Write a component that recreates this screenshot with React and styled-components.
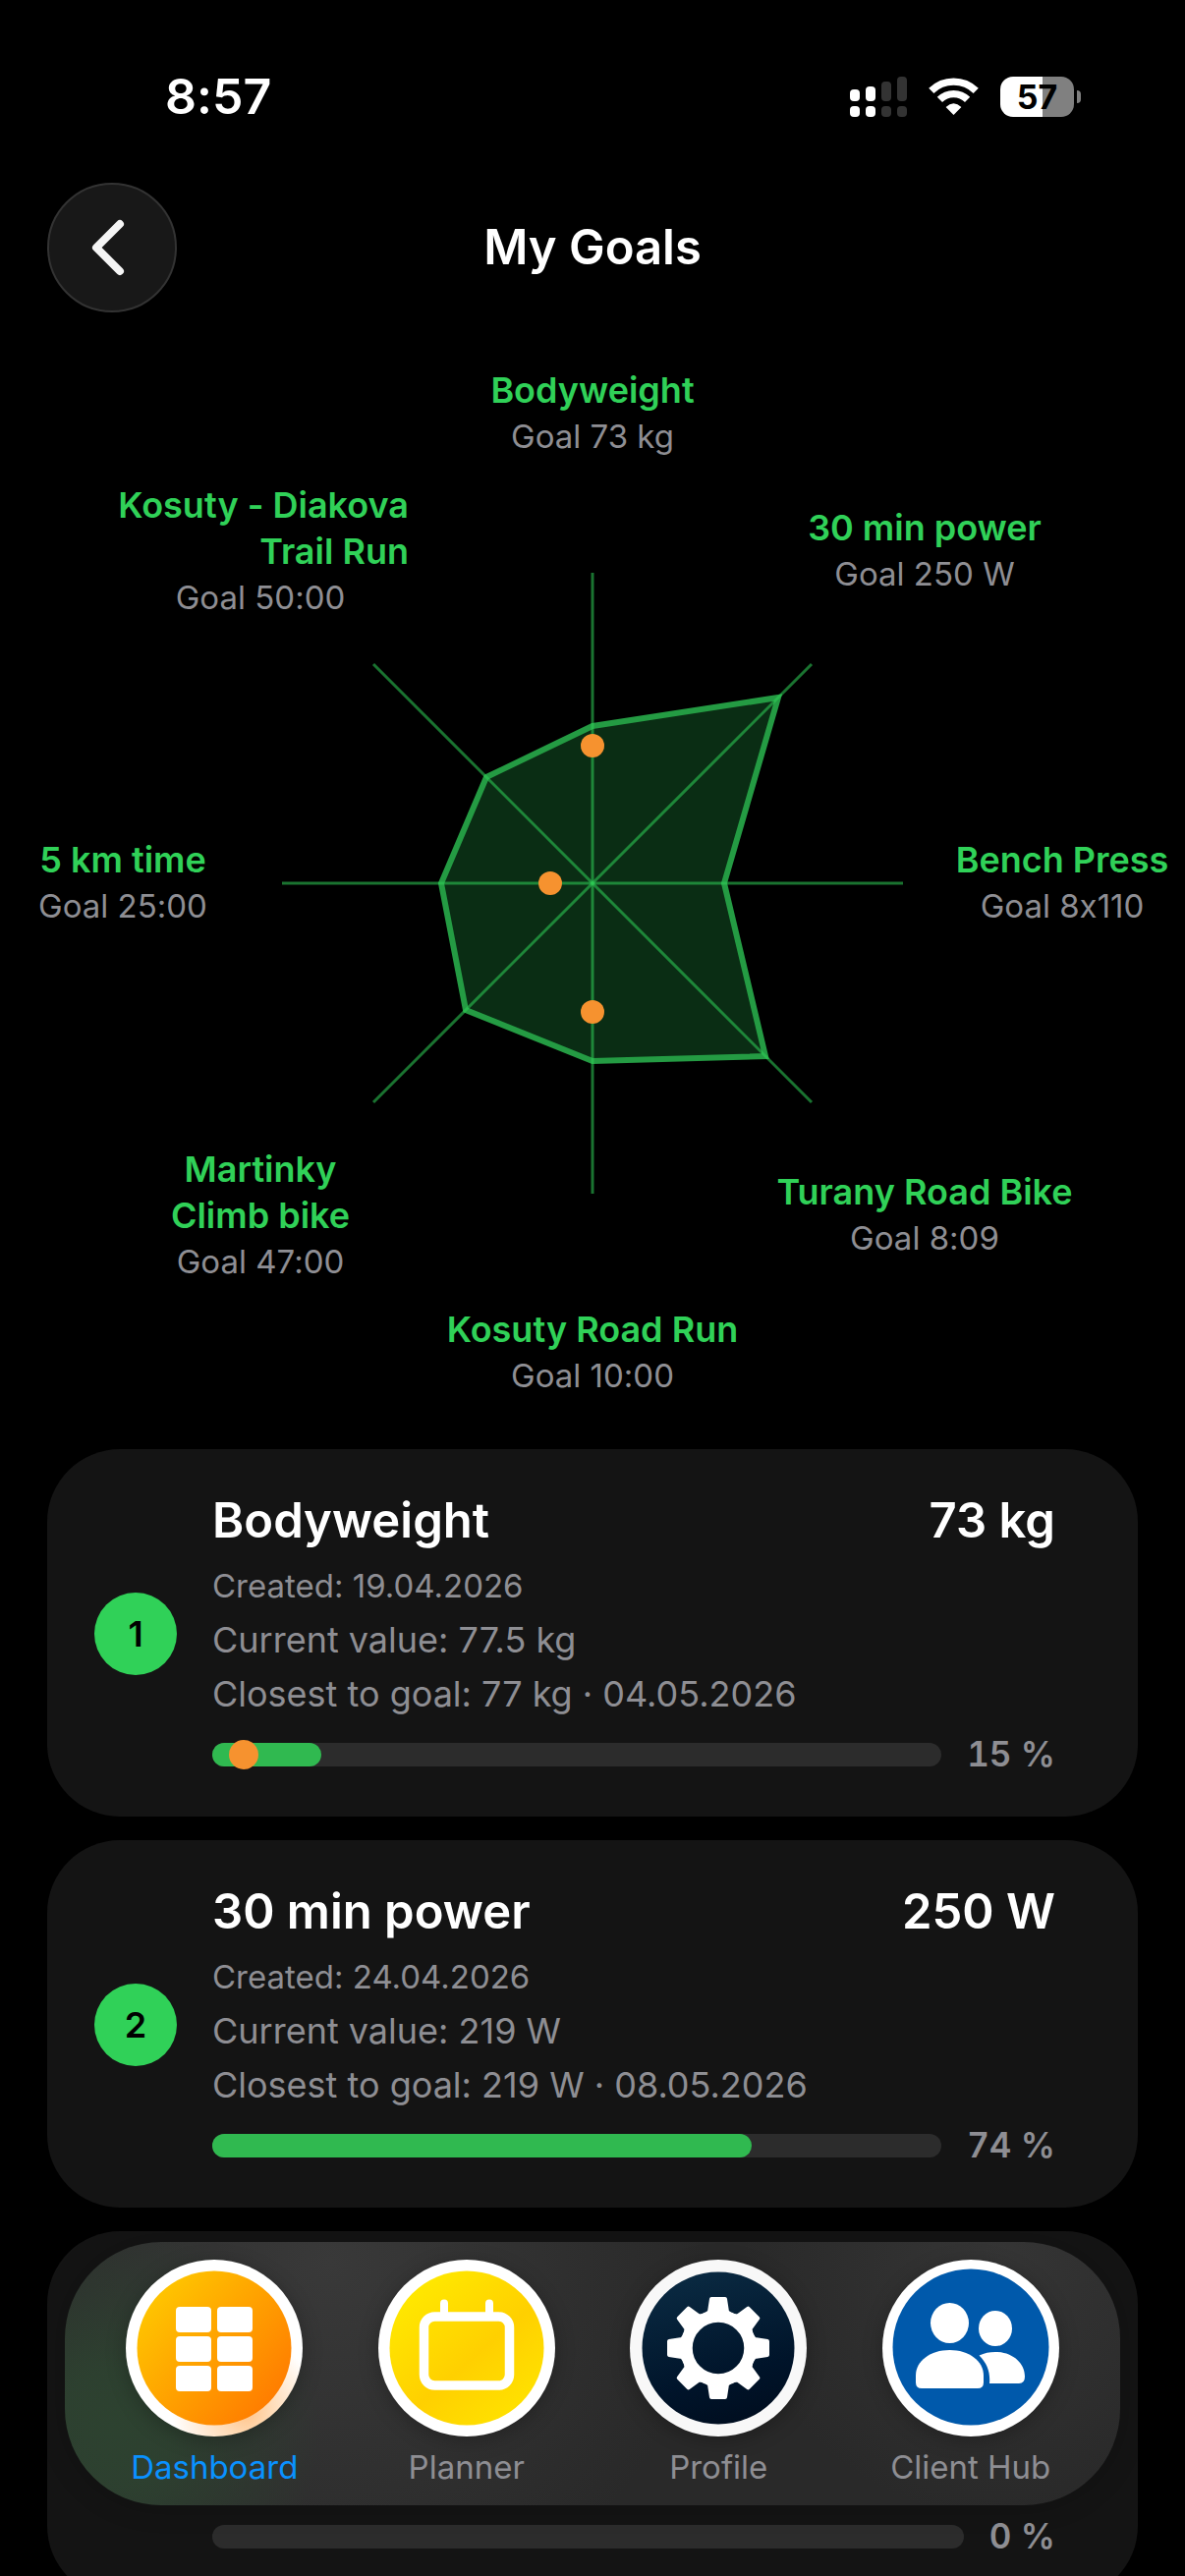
import styled, { createGlobalStyle } from "styled-components";

const GlobalStyle = createGlobalStyle`
  * {
    box-sizing: border-box;
  }

  body {
    margin: 0;
    background: #000;
    color: #fff;
    font-family: Inter, "Liberation Sans", sans-serif;
    font-feature-settings: "calt" 0;
  }
`;

const Screen = styled.div`
  position: relative;
  height: 100vh;
  overflow: hidden;
`;

const StatusBar = styled.div`
  display: flex;
  align-items: center;
  justify-content: space-between;
  height: 60px;
  margin: 68px 106px 0 168px;
`;

const Clock = styled.time`
  font-size: 50px;
  font-weight: 600;
  line-height: 60px;
`;

const StatusIcons = styled.div`
  display: flex;
  align-items: center;
  gap: 22px;
`;

const BatteryWrap = styled.div`
  display: flex;
  align-items: center;
  gap: 3px;
`;

const BatteryBody = styled.div`
  width: 75px;
  height: 41px;
  border-radius: 13px;
  background: linear-gradient(to right, #fff 57%, #808080 57%);
  color: #000;
  font-size: 34px;
  font-weight: 700;
  line-height: 41px;
  text-align: center;
`;

const BatteryNub = styled.div`
  width: 4px;
  height: 13px;
  border-radius: 0 4px 4px 0;
  background: #808080;
`;

const Header = styled.header`
  display: grid;
  grid-template-columns: 132px 1fr 132px;
  align-items: center;
  margin-top: 58px;
  padding: 0 48px 5px;
`;

const BackButton = styled.button`
  display: flex;
  align-items: center;
  justify-content: center;
  width: 132px;
  height: 132px;
  padding: 0 8px 0 0;
  border: 2px solid #333;
  border-radius: 50%;
  background: #181818;
`;

const PageTitle = styled.h1`
  margin: 0;
  font-size: 49px;
  font-weight: 600;
  line-height: 60px;
  text-align: center;
`;

const Chart = styled.section`
  position: relative;
  display: flex;
  align-items: center;
  justify-content: center;
  height: 1152px;
`;

const AxisLabel = styled.div`
  position: absolute;
  left: calc(50% + ${(props) => props.$x}px);
  top: calc(50% + ${(props) => props.$y}px);
  display: flex;
  flex-direction: column;
  align-items: center;
  transform: translate(-50%, -50%);
`;

const AxisName = styled.span`
  min-width: ${(props) => (props.$align === "right" ? "302px" : "0")};
  color: #30d158;
  font-size: 36px;
  font-weight: 600;
  line-height: 47px;
  text-align: ${(props) => props.$align};
  white-space: pre;
`;

const AxisGoal = styled.span`
  color: #8e8e93;
  font-size: 33px;
  line-height: 47px;
  white-space: nowrap;
`;

const GoalList = styled.ol`
  display: flex;
  flex-direction: column;
  gap: 24px;
  margin: 0;
  padding: 0 48px;
  list-style: none;
`;

const GoalCard = styled.li`
  display: flex;
  align-items: center;
  gap: 36px;
  min-height: 374px;
  padding: 43px 84px 42px 48px;
  border-radius: 74px;
  background: #141414;
`;

const Rank = styled.span`
  flex: none;
  width: 84px;
  height: 84px;
  border-radius: 50%;
  background: ${(props) => (props.$filled ? "#30d158" : "transparent")};
  color: #000;
  font-size: 36px;
  font-weight: 600;
  line-height: 84px;
  text-align: center;
`;

const GoalBody = styled.div`
  display: flex;
  flex: 1;
  flex-direction: column;
  align-self: stretch;
  justify-content: flex-end;
`;

const GoalHeading = styled.div`
  display: flex;
  justify-content: space-between;
  margin-bottom: 9px;
  font-size: 49px;
  font-weight: 600;
  line-height: 60px;
`;

const GoalName = styled.h2`
  margin: 0;
  font-size: inherit;
  font-weight: inherit;
`;

const GoalMeta = styled.p`
  margin: 0;
  color: #8e8e93;
  font-size: ${(props) => (props.$small ? "33px" : "36px")};
  line-height: 55px;
`;

const ProgressRow = styled.div`
  display: flex;
  align-items: center;
  gap: 26px;
  margin-top: 12px;
`;

const Track = styled.div`
  position: relative;
  flex: 1;
  height: 24px;
  border-radius: 12px;
  background: #2c2c2c;
`;

const Fill = styled.div`
  height: 100%;
  border-radius: 12px;
  background: #30b950;
`;

const Marker = styled.div`
  position: absolute;
  top: -3px;
  width: 30px;
  height: 30px;
  border-radius: 50%;
  background: #f6922f;
  transform: translateX(-50%);
`;

const Percent = styled.span`
  color: #8e8e93;
  font-size: 35px;
  font-variant-numeric: tabular-nums;
  font-weight: 600;
  line-height: 43px;
`;

const TabBar = styled.nav`
  position: absolute;
  right: 66px;
  bottom: 72px;
  left: 66px;
  display: grid;
  grid-template-columns: repeat(4, 1fr);
  height: 268px;
  padding: 18px 24px;
  border-radius: 98px;
  background:
    radial-gradient(circle at 50px 190px, #2d4230 0, rgba(45, 66, 48, 0.9) 60px, rgba(45, 66, 48, 0) 210px),
    radial-gradient(circle at 270px 20px, #393939 0, rgba(57, 57, 57, 0) 380px),
    radial-gradient(circle at 950px 20px, #353535 0, rgba(53, 53, 53, 0) 260px),
    #292929;
  box-shadow: 0 0 30px rgba(0, 0, 0, 0.2);
`;

const Tab = styled.a`
  display: flex;
  flex-direction: column;
  align-items: center;
  gap: 10px;
  color: ${(props) => (props.$active ? "#0a91ff" : "#8e8e93")};
  font-size: 33px;
  line-height: 42px;
  text-decoration: none;
`;

const TabDisc = styled.span`
  display: flex;
  width: 180px;
  height: 180px;
  border-radius: 50%;
  box-shadow: 0 4px 20px rgba(0, 0, 0, 0.25);
`;

// radius of each goal on the chart, clockwise from the top
const AXES = [
  { name: "Bodyweight", goal: "Goal 73 kg", value: 160, latest: 140 },
  { name: "30 min power", goal: "Goal 250 W", value: 267 },
  { name: "Bench Press", goal: "Goal 8x110", value: 134 },
  { name: "Turany Road Bike", goal: "Goal 8:09", value: 249 },
  { name: "Kosuty Road Run", goal: "Goal 10:00", value: 181, latest: 131 },
  { name: "Martinky\nClimb bike", goal: "Goal 47:00", value: 183 },
  { name: "5 km time", goal: "Goal 25:00", value: 154, latest: 43 },
  { name: "Kosuty - Diakova\nTrail Run", goal: "Goal 50:00", value: 153, align: "right" },
];

const AXIS_LENGTH = 316;
const LABEL_RADIUS = 478;

const GOALS = [
  {
    name: "Bodyweight",
    target: "73 kg",
    created: "19.04.2026",
    meta: ["Current value: 77.5 kg", "Closest to goal: 77 kg · 04.05.2026"],
    percent: 15,
    marker: 4.3,
  },
  {
    name: "30 min power",
    target: "250 W",
    created: "24.04.2026",
    meta: ["Current value: 219 W", "Closest to goal: 219 W · 08.05.2026"],
    percent: 74,
  },
  { meta: [], percent: 0 },
];

const polar = (index, radius) => {
  const angle = (index * Math.PI) / 4;
  return [Math.round(Math.sin(angle) * radius), Math.round(-Math.cos(angle) * radius)];
};

const SignalIcon = () => (
  <svg width="58" height="41" viewBox="0 0 58 41">
    <g fill="#fff">
      <rect x="0" y="13" width="10" height="12" rx="4" />
      <rect x="16" y="10" width="10" height="15" rx="4" />
      <rect x="0" y="30" width="10" height="11" rx="4" />
      <rect x="16" y="30" width="10" height="11" rx="4" />
    </g>
    <g fill="#333">
      <rect x="32" y="5" width="10" height="20" rx="4" />
      <rect x="48" y="0" width="10" height="25" rx="4" />
      <rect x="32" y="30" width="10" height="11" rx="4" />
      <rect x="48" y="30" width="10" height="11" rx="4" />
    </g>
  </svg>
);

const WifiIcon = () => (
  <svg width="51" height="38" viewBox="0 0 51 38">
    <g fill="none" stroke="#fff" strokeWidth="7.4">
      <path d="M2.8 13.4A32.5 32.5 0 0 1 48.2 13.4" />
      <path d="M11.4 22.4A20 20 0 0 1 39.6 22.4" />
    </g>
    <path d="M25.5 38L17.6 30Q25.5 22.6 33.4 30Z" fill="#fff" />
  </svg>
);

const DashboardIcon = () => (
  <svg width="180" height="180" viewBox="0 0 180 180">
    <defs>
      <linearGradient id="dash" x1="0.1" y1="0.1" x2="0.9" y2="0.8">
        <stop offset="0" stopColor="#ffc800" />
        <stop offset="1" stopColor="#ff7e00" />
      </linearGradient>
      <radialGradient id="dashRing" cx="0.68" cy="0.86" r="0.42">
        <stop offset="0" stopColor="#ffc48a" />
        <stop offset="0.35" stopColor="#ffdcb8" />
        <stop offset="1" stopColor="#fff" />
      </radialGradient>
    </defs>
    <circle cx="90" cy="90" r="90" fill="url(#dashRing)" />
    <circle cx="90" cy="90" r="78.5" fill="url(#dash)" />
    <g fill="#fff">
      {[48, 78, 108].map((y) => (
        <g key={y}>
          <rect x="51" y={y} width="36" height="26" rx="4" />
          <rect x="93" y={y} width="36" height="26" rx="4" />
        </g>
      ))}
    </g>
  </svg>
);

const PlannerIcon = () => (
  <svg width="180" height="180" viewBox="0 0 180 180">
    <defs>
      <linearGradient id="plan" x1="0.1" y1="0.1" x2="0.8" y2="0.9">
        <stop offset="0" stopColor="#ffea00" />
        <stop offset="0.6" stopColor="#ffd000" />
        <stop offset="1" stopColor="#ffe000" />
      </linearGradient>
    </defs>
    <circle cx="90" cy="90" r="90" fill="#fff" />
    <circle cx="90" cy="90" r="78.5" fill="url(#plan)" />
    <rect x="46.5" y="58" width="87" height="70" rx="11" fill="none" stroke="#fff" strokeWidth="9.5" />
    <path d="M67 56V44.5M113 56V44.5" stroke="#fff" strokeWidth="8" strokeLinecap="round" />
  </svg>
);

const ProfileIcon = () => (
  <svg width="180" height="180" viewBox="0 0 180 180">
    <defs>
      <linearGradient id="prof" x1="0.3" y1="0" x2="0.6" y2="1">
        <stop offset="0" stopColor="#0a2a42" />
        <stop offset="0.7" stopColor="#00142a" />
        <stop offset="1" stopColor="#000e20" />
      </linearGradient>
    </defs>
    <circle cx="90" cy="90" r="90" fill="#f8f8f8" />
    <circle cx="90" cy="90" r="77.5" fill="url(#prof)" />
    <circle cx="90" cy="90" r="32.5" fill="none" stroke="#fff" strokeWidth="12.5" />
    <g fill="#fff" stroke="#fff" strokeWidth="4" strokeLinejoin="round">
      {[0, 45, 90, 135, 180, 225, 270, 315].map((turn) => (
        <path key={turn} d="M83 40H97L99 53L104 57H76L81 53Z" transform={`rotate(${turn} 90 90)`} />
      ))}
    </g>
  </svg>
);

const ClientHubIcon = () => (
  <svg width="180" height="180" viewBox="0 0 180 180">
    <circle cx="90" cy="90" r="90" fill="#fff" />
    <circle cx="90" cy="89" r="79.5" fill="#0059ab" />
    <g fill="#fff">
      <ellipse cx="68.5" cy="64.5" rx="19.5" ry="20.5" />
      <ellipse cx="115" cy="70" rx="17" ry="18" />
      <path d="M34 118C34 103 49 92 68.5 92S103 103 103 118V125Q103 131 97 131H40Q34 131 34 125Z" />
      <path d="M98.5 97.5C104 95 109 94 115 94C132 94 145 105 145 119Q145 126 139 126H109C110 115 107 106 98.5 97.5Z" />
    </g>
  </svg>
);

const TABS = [
  { label: "Dashboard", Icon: DashboardIcon, active: true },
  { label: "Planner", Icon: PlannerIcon },
  { label: "Profile", Icon: ProfileIcon },
  { label: "Client Hub", Icon: ClientHubIcon },
];

const RadarChart = () => {
  const outline = AXES.map((axis, i) => polar(i, axis.value).join(",")).join(" ");

  return (
    <Chart>
      <svg width="640" height="640" viewBox="-320 -320 640 640">
        <polygon points={outline} fill="#0a2d14" stroke="#249b43" strokeWidth="6" />
        {AXES.map((axis, i) => {
          const [x, y] = polar(i, AXIS_LENGTH);
          return (
            <line key={axis.name} x1="0" y1="0" x2={x} y2={y} stroke="#30d158" strokeOpacity="0.55" strokeWidth="3" />
          );
        })}
        {AXES.map((axis, i) => {
          if (!axis.latest) return null;
          const [x, y] = polar(i, axis.latest);
          return <circle key={axis.name} cx={x} cy={y} r="12" fill="#f6922f" />;
        })}
      </svg>
      {AXES.map((axis, i) => {
        const [x, y] = polar(i, LABEL_RADIUS);
        return (
          <AxisLabel key={axis.name} $x={x} $y={y}>
            <AxisName $align={axis.align || "center"}>{axis.name}</AxisName>
            <AxisGoal>{axis.goal}</AxisGoal>
          </AxisLabel>
        );
      })}
    </Chart>
  );
};

const Goal = ({ goal, rank }) => (
  <GoalCard>
    <Rank $filled={!!goal.name}>{goal.name ? rank : null}</Rank>
    <GoalBody>
      {goal.name && (
        <>
          <GoalHeading>
            <GoalName>{goal.name}</GoalName>
            <span>{goal.target}</span>
          </GoalHeading>
          <GoalMeta $small>Created: {goal.created}</GoalMeta>
        </>
      )}
      {goal.meta.map((line) => (
        <GoalMeta key={line}>{line}</GoalMeta>
      ))}
      <ProgressRow>
        <Track>
          <Fill style={{ width: `${goal.percent}%` }} />
          {goal.marker && <Marker style={{ left: `${goal.marker}%` }} />}
        </Track>
        <Percent>{goal.percent} %</Percent>
      </ProgressRow>
    </GoalBody>
  </GoalCard>
);

const App = () => {
  return (
    <Screen>
      <GlobalStyle />
      <StatusBar>
        <Clock>8:57</Clock>
        <StatusIcons>
          <SignalIcon />
          <WifiIcon />
          <BatteryWrap>
            <BatteryBody>57</BatteryBody>
            <BatteryNub />
          </BatteryWrap>
        </StatusIcons>
      </StatusBar>

      <Header>
        <BackButton type="button" aria-label="Back">
          <svg width="34" height="58" viewBox="0 0 34 58">
            <path d="M29 5L5 29L29 53" fill="none" stroke="#f5f5f5" strokeWidth="8" strokeLinecap="round" strokeLinejoin="round" />
          </svg>
        </BackButton>
        <PageTitle>My Goals</PageTitle>
      </Header>

      <RadarChart />

      <GoalList>
        {GOALS.map((goal, i) => (
          <Goal key={i} goal={goal} rank={i + 1} />
        ))}
      </GoalList>

      <TabBar>
        {TABS.map(({ label, Icon, active }) => (
          <Tab key={label} href="#" $active={active}>
            <TabDisc>
              <Icon />
            </TabDisc>
            {label}
          </Tab>
        ))}
      </TabBar>
    </Screen>
  );
};

export default App;
